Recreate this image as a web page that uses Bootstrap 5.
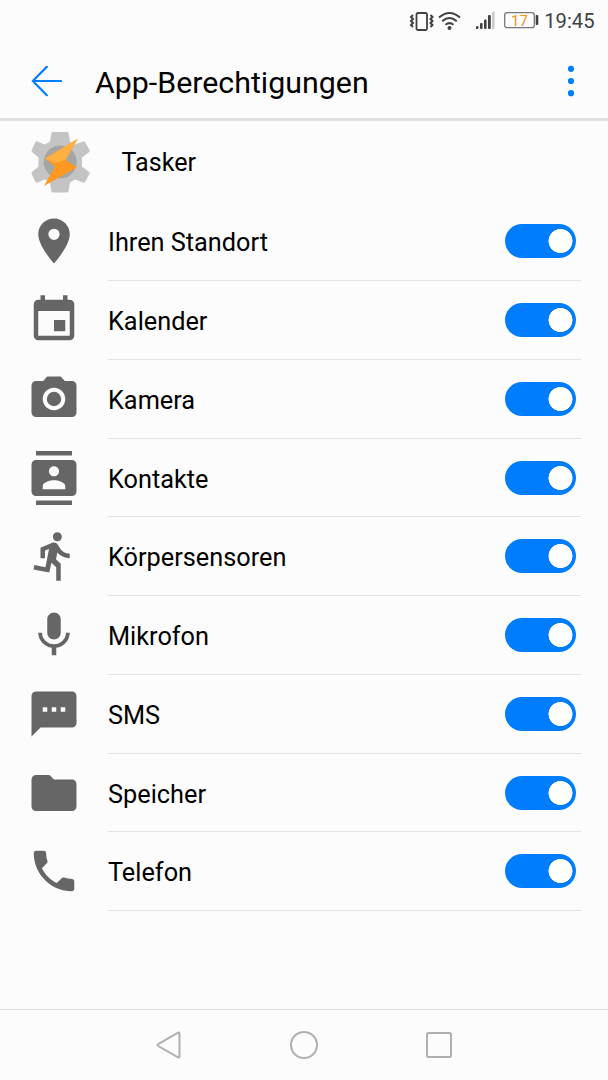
<!DOCTYPE html>
<html lang="de">
<head>
<meta charset="utf-8">
<meta name="viewport" content="width=device-width, initial-scale=1">
<title>App-Berechtigungen</title>
<link href="https://cdn.jsdelivr.net/npm/bootstrap@5.3.0/dist/css/bootstrap.min.css" rel="stylesheet">
<style>
body{font-family:Roboto,"Liberation Sans",sans-serif;background:#fcfcfc;color:#000;height:1080px;overflow:hidden}
svg{display:block;flex:none}
.status-bar{height:41px;padding-right:13.5px;color:#414144;font-size:20.2px;line-height:1}
.status-bar .clock{padding-top:2px}
.status-bar .wifi{margin-left:2.5px}
.status-bar .cell-signal{margin-left:14px}
.app-bar{height:80px;border-bottom:3px solid #e1e1e1;padding:2px 32px 0 31px}
.app-bar h1{font-size:30.35px;line-height:1;margin:5px 0 0 33px}
.app-row{height:81.4px;padding-left:27px;font-size:25.1px}
.app-row span{margin:3px 0 0 28.5px}
.perm{height:78.75px;padding-left:27px;padding-right:27px}
.perm>svg{width:54px;height:54px;fill:#666;margin-top:-1px}
.perm-body{margin-left:27px;border-bottom:1.5px solid #e2e2e2;font-size:25.3px;padding-right:5px}
.perm-body label{padding-top:4px}
.form-switch .form-check-input.toggle{width:71px;height:34px;margin:0;border:0;border-radius:17px;float:none;background-color:#007dff;background-image:radial-gradient(circle at 55.5px 17px,#fff 11.7px,transparent 12.3px);background-size:100% 100%;background-position:0 0}
.nav-keys{height:71px;border-top:1px solid #dedede;padding:0 154px 1px}
</style>
</head>
<body class="d-flex flex-column m-0">
<div class="status-bar d-flex align-items-center justify-content-end flex-shrink-0">
  <svg width="26" height="22" viewBox="0 0 26 22" fill="none" stroke="#414144" stroke-width="1.8"><rect x="7.5" y="3" width="10.5" height="17" rx="1.5"/><path d="M4 5l-2 2 2 2-2 2 2 2-2 2 2 2M21.500 5l2 2-2 2 2 2-2 2 2 2-2 2" stroke-width="2"/></svg>
  <svg class="wifi" width="24" height="22" viewBox="0 0 24 22" fill="none" stroke="#414144" stroke-width="2"><path d="M2 7.500Q12.500-1.500 23 7.500M5.200 11.200Q12.500 4.800 19.800 11.200M8.500 14.700Q12.500 11.500 16.500 14.700"/><circle cx="12.500" cy="18" r="2" fill="#414144" stroke="none"/></svg>
  <svg class="cell-signal" width="21" height="22" viewBox="0 0 21 22" fill="#414144"><rect x="1" y="16" width="2.500" height="3" rx="1"/><rect x="5" y="13" width="2.600" height="6" rx="1"/><rect x="9" y="9.500" width="2.600" height="9.500" rx="1"/><rect x="13" y="5" width="2.800" height="14" rx="1"/><rect x="17" y="1.500" width="2.600" height="17.500" rx="1" fill="#ccc"/></svg>
  <svg class="ms-2" width="36" height="22" viewBox="0 0 36 22"><rect x=".7" y="2.700" width="29.600" height="15" rx="2.500" fill="none" stroke="#777" stroke-width="1.300"/><rect x="31.700" y="5" width="2.600" height="10" rx="1" fill="#414144"/><text x="15.500" y="15.500" text-anchor="middle" font-size="15" fill="#f69220">17</text></svg>
  <span class="clock ms-1">19:45</span>
</div>
<header class="app-bar d-flex align-items-center flex-shrink-0">
  <svg width="31" height="32" viewBox="0 0 31 32" fill="none" stroke="#007dff" stroke-width="2.200" stroke-linecap="round" stroke-linejoin="round"><path d="M15.800 1.800L1.800 16l14 14.200M1.800 16H30"/></svg>
  <h1 class="fw-normal">App-Berechtigungen</h1>
  <svg class="ms-auto" width="10" height="32" viewBox="0 0 10 32" fill="#007dff"><circle cx="5" cy="3.800" r="3.100"/><circle cx="5" cy="16" r="3.100"/><circle cx="5" cy="28.200" r="3.100"/></svg>
</header>
<div class="app-row d-flex align-items-center flex-shrink-0">
  <svg width="66" height="66" viewBox="0 0 66 66"><path d="M26 3h14q1.500 0 1.700 1.500l1.300 8 5 3 8-3q1.500-.5 2.200.8l4.300 7.700q.7 1.200-.3 2L55 28.500v9l7.200 5.500q1 .8.300 2l-4.300 7.700q-.7 1.300-2.200.8l-8-3-5 3-1.300 8Q41.500 63.500 40 63.500H26q-1.500 0-1.700-1.500L23 53.500l-5-3-7.500 3q-1.500.5-2.200-.8L4.700 45q-.7-1.200.3-2l6.500-5.500v-9L5 23q-1-.8-.3-2l3.600-7.700q.7-1.300 2.200-.8l7.500 3 5-3 1.300-8Q24.500 3 26 3z" fill="#c4c4c4"/><circle cx="33.200" cy="33" r="16.500" fill="#a5a5a5"/><path d="M18 29.500L50.500 10 38.500 31l11.500 7.500L17 57 28 37.500z" fill="#ff9820"/><path d="M18 29.500L50.500 10 38.500 31 28 34z" fill="#ffb040"/></svg>
  <span>Tasker</span>
</div>
<main class="flex-grow-1">
  <div class="perm d-flex align-items-center"><svg viewBox="0 0 24 24"><path d="M12 2C8.130 2 5 5.130 5 9c0 5.250 7 13 7 13s7-7.750 7-13c0-3.870-3.130-7-7-7zm0 9.500a2.500 2.500 0 1 1 0-5 2.500 2.500 0 0 1 0 5z"/></svg>
    <div class="perm-body form-switch d-flex align-items-center justify-content-between flex-grow-1 h-100 ps-0"><label for="p1">Ihren Standort</label><input class="form-check-input toggle" type="checkbox" role="switch" id="p1" checked></div></div>
  <div class="perm d-flex align-items-center"><svg viewBox="0 0 24 24"><path d="M17 12h-5v5h5v-5zM16 1v2H8V1H6v2H5c-1.110 0-1.990.9-1.990 2L3 19c0 1.100.890 2 2 2h14c1.100 0 2-.9 2-2V5c0-1.100-.9-2-2-2h-1V1h-2zm3 18H5V8h14v11z"/></svg>
    <div class="perm-body form-switch d-flex align-items-center justify-content-between flex-grow-1 h-100 ps-0"><label for="p2">Kalender</label><input class="form-check-input toggle" type="checkbox" role="switch" id="p2" checked></div></div>
  <div class="perm d-flex align-items-center"><svg viewBox="0 0 24 24"><circle cx="12" cy="12" r="3.200"/><path d="M9 2L7.170 4H4c-1.100 0-2 .9-2 2v12c0 1.100.9 2 2 2h16c1.100 0 2-.9 2-2V6c0-1.100-.9-2-2-2h-3.170L15 2H9zm3 15c-2.760 0-5-2.240-5-5s2.240-5 5-5 5 2.240 5 5-2.240 5-5 5z"/></svg>
    <div class="perm-body form-switch d-flex align-items-center justify-content-between flex-grow-1 h-100 ps-0"><label for="p3">Kamera</label><input class="form-check-input toggle" type="checkbox" role="switch" id="p3" checked></div></div>
  <div class="perm d-flex align-items-center"><svg viewBox="0 0 24 24"><path d="M20 0H4v2h16V0zM4 24h16v-2H4v2zM20 4H4c-1.100 0-2 .9-2 2v12c0 1.100.9 2 2 2h16c1.100 0 2-.9 2-2V6c0-1.100-.9-2-2-2zm-8 2.750c1.240 0 2.250 1.010 2.250 2.250s-1.010 2.250-2.250 2.250S9.750 10.240 9.750 9 10.760 6.750 12 6.750zM17 17H7v-1.500c0-1.670 3.330-2.500 5-2.500s5 .83 5 2.500V17z"/></svg>
    <div class="perm-body form-switch d-flex align-items-center justify-content-between flex-grow-1 h-100 ps-0"><label for="p4">Kontakte</label><input class="form-check-input toggle" type="checkbox" role="switch" id="p4" checked></div></div>
  <div class="perm d-flex align-items-center"><svg viewBox="0 0 24 24"><path d="M13.490 5.480c1.100 0 2-.9 2-2s-.9-2-2-2-2 .9-2 2 .9 2 2 2zm-3.600 13.900l1-4.400 2.100 2v6h2v-7.500l-2.100-2 .6-3c1.300 1.500 3.300 2.500 5.500 2.500v-2c-1.900 0-3.500-1-4.300-2.400l-1-1.600c-.4-.6-1-1-1.700-1-.3 0-.5.1-.8.1l-5.200 2.200v4.700h2v-3.400l1.800-.7-1.600 8.100-4.900-1-.4 2 7 1.400z"/></svg>
    <div class="perm-body form-switch d-flex align-items-center justify-content-between flex-grow-1 h-100 ps-0"><label for="p5">Körpersensoren</label><input class="form-check-input toggle" type="checkbox" role="switch" id="p5" checked></div></div>
  <div class="perm d-flex align-items-center"><svg viewBox="0 0 24 24"><path d="M12 14c1.660 0 2.990-1.340 2.990-3L15 5c0-1.660-1.340-3-3-3S9 3.340 9 5v6c0 1.660 1.340 3 3 3zm5.300-3c0 3-2.540 5.100-5.300 5.100S6.700 14 6.700 11H5c0 3.410 2.720 6.230 6 6.720V21h2v-3.280c3.280-.48 6-3.300 6-6.720h-1.700z"/></svg>
    <div class="perm-body form-switch d-flex align-items-center justify-content-between flex-grow-1 h-100 ps-0"><label for="p6">Mikrofon</label><input class="form-check-input toggle" type="checkbox" role="switch" id="p6" checked></div></div>
  <div class="perm d-flex align-items-center"><svg viewBox="0 0 24 24"><path d="M20 2H4c-1.100 0-1.990.9-1.990 2L2 22l4-4h14c1.100 0 2-.9 2-2V4c0-1.100-.9-2-2-2zM9 11H7V9h2v2zm4 0h-2V9h2v2zm4 0h-2V9h2v2z"/></svg>
    <div class="perm-body form-switch d-flex align-items-center justify-content-between flex-grow-1 h-100 ps-0"><label for="p7">SMS</label><input class="form-check-input toggle" type="checkbox" role="switch" id="p7" checked></div></div>
  <div class="perm d-flex align-items-center"><svg viewBox="0 0 24 24"><path d="M10 4H4c-1.100 0-1.990.9-1.990 2L2 18c0 1.100.9 2 2 2h16c1.100 0 2-.9 2-2V8c0-1.100-.9-2-2-2h-8l-2-2z"/></svg>
    <div class="perm-body form-switch d-flex align-items-center justify-content-between flex-grow-1 h-100 ps-0"><label for="p8">Speicher</label><input class="form-check-input toggle" type="checkbox" role="switch" id="p8" checked></div></div>
  <div class="perm d-flex align-items-center"><svg viewBox="0 0 24 24"><path d="M6.620 10.790c1.440 2.830 3.760 5.140 6.590 6.590l2.200-2.200c.27-.27.670-.36 1.020-.24 1.120.37 2.330.57 3.570.57.550 0 1 .45 1 1V20c0 .55-.45 1-1 1-9.390 0-17-7.610-17-17 0-.55.450-1 1-1h3.500c.55 0 1 .45 1 1 0 1.250.2 2.450.57 3.570.11.350.03.740-.25 1.020l-2.200 2.200z"/></svg>
    <div class="perm-body form-switch d-flex align-items-center justify-content-between flex-grow-1 h-100 ps-0"><label for="p9">Telefon</label><input class="form-check-input toggle" type="checkbox" role="switch" id="p9" checked></div></div>
</main>
<nav class="nav-keys d-flex align-items-center justify-content-between flex-shrink-0">
  <svg width="30" height="30" viewBox="0 0 30 30" fill="none" stroke="#b0b0b0" stroke-width="2" stroke-linejoin="round"><path d="M25.500 3.500v23q0 1.500-1.400.8L4.200 16q-1.300-.9 0-1.800L24.100 2.700q1.400-.7 1.400.8z"/></svg>
  <svg width="30" height="30" viewBox="0 0 30 30" fill="none" stroke="#b0b0b0" stroke-width="2"><circle cx="15" cy="15" r="13"/></svg>
  <svg width="30" height="30" viewBox="0 0 30 30" fill="none" stroke="#b0b0b0" stroke-width="2"><rect x="3" y="3" width="24" height="24" rx="1.500"/></svg>
</nav>
<script src="https://cdn.jsdelivr.net/npm/bootstrap@5.3.0/dist/js/bootstrap.bundle.min.js"></script>
</body>
</html>
